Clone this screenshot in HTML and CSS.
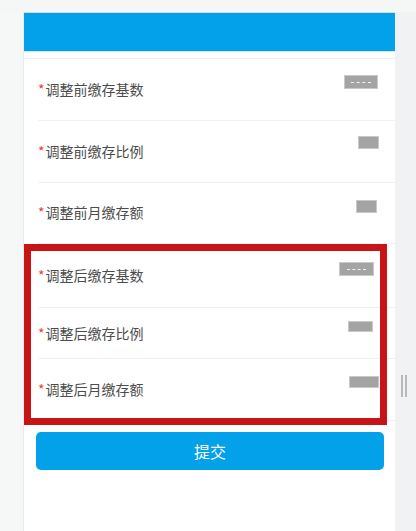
FILE: index.html
```html
<!DOCTYPE html>
<html lang="zh-CN">
<head>
<meta charset="utf-8">
<title>调整缴存</title>
<link rel="stylesheet" href="styles.css">
</head>
<body>
<div class="page">
  <div class="gutter-left"></div>
  <div class="card">
    <div class="header"></div>
    <div class="spacer"></div>
    <div class="form">
      <div class="row r1">
        <span class="label"><span class="req">*</span>调整前缴存基数</span>
        <span class="val v1"><span class="dash"></span></span>
      </div>
      <div class="row r2">
        <span class="label"><span class="req">*</span>调整前缴存比例</span>
        <span class="val v2"></span>
      </div>
      <div class="row r3">
        <span class="label"><span class="req">*</span>调整前月缴存额</span>
        <span class="val v3"></span>
      </div>
      <div class="group">
        <div class="row r4">
          <span class="label"><span class="req">*</span>调整后缴存基数</span>
          <span class="val v4"><span class="dash"></span></span>
        </div>
        <div class="row r5">
          <span class="label"><span class="req">*</span>调整后缴存比例</span>
          <span class="val v5"></span>
        </div>
        <div class="row r6">
          <span class="label"><span class="req">*</span>调整后月缴存额</span>
          <span class="val v6"></span>
        </div>
        <div class="highlight"></div>
      </div>
    </div>
    <div class="actions">
      <button class="submit">提交</button>
    </div>
  </div>
  <div class="gutter-right">
    <div class="grip"></div>
  </div>
</div>
</body>
</html>
```

FILE: styles.css
```css
* { box-sizing: border-box; }
html, body {
  margin: 0;
  padding: 0;
  height: 100%;
  background: #f5f6f6;
  font-family: "Noto Sans CJK SC", "Noto Sans", sans-serif;
}
.page {
  display: flex;
  height: 531px;
  padding-top: 12px;
  overflow: hidden;
}
.gutter-left {
  width: 24px;
  flex: none;
  background: #f6f7f7;
}
.card {
  width: 371px;
  flex: none;
  background: #fff;
  display: flex;
  flex-direction: column;
  box-shadow: -1px 0 0 #e9eaea;
}
.header {
  height: 40px;
  background: #02a1e9;
  border-top: 1px solid #d9dcdc;
  border-bottom: 1px solid #cbe9f7;
}
.spacer {
  height: 7px;
  border-bottom: 1px solid #f1f1f1;
}
.form {
  display: flex;
  flex-direction: column;
}
.row {
  display: flex;
  justify-content: space-between;
  align-items: center;
  margin-left: 14px;
  border-bottom: 1px solid #f1f1f1;
}
.label {
  font-size: 14px;
  line-height: 20px;
  color: #4c4c4c;
  margin-bottom: 2px;
}
.req {
  color: #f23a3a;
  margin-right: 1px;
}
.val {
  align-self: flex-start;
  background: #a4a4a4;
  border: 1px solid #c9c9c9;
  display: flex;
  align-items: center;
  justify-content: center;
}
.dash {
  display: block;
  width: 60%;
  border-top: 1px dashed #f4f4f4;
}
.r1 { height: 62px; }
.r2 { height: 62px; }
.r3 { height: 61px; }
.r4 { height: 64px; padding-top: 1px; }
.r5 { height: 51px; padding-top: 1px; }
.r6 { height: 62px; padding-top: 1px; }
.v1 { width: 34px; height: 14px; margin-top: 16px; margin-right: 17px; }
.v2 { width: 21px; height: 13px; margin-top: 15px; margin-right: 16px; }
.v3 { width: 21px; height: 13px; margin-top: 17px; margin-right: 18px; }
.v4 { width: 35px; height: 14px; margin-top: 17px; margin-right: 21px; }
.v5 { width: 25px; height: 11px; margin-top: 12px; margin-right: 22px; }
.v6 { width: 30px; height: 12px; margin-top: 16px; margin-right: 16px; }
.group {
  position: relative;
  display: flex;
  flex-direction: column;
}
.highlight {
  position: absolute;
  left: 0;
  top: 0;
  width: 363px;
  height: 181px;
  border: 7px solid #c81416;
  pointer-events: none;
}
.actions {
  padding: 11px 11px 0 12px;
}
.submit {
  display: block;
  width: 100%;
  height: 38px;
  border: none;
  border-radius: 5px;
  background: #02a1e9;
  color: #fff;
  font-family: "Noto Sans CJK SC", "Noto Sans", sans-serif;
  font-size: 16px;
  line-height: 38px;
  padding: 0;
}
.gutter-right {
  flex: 1;
  background: #f1f2f4;
  position: relative;
}
.grip {
  position: absolute;
  left: 6px;
  top: 363px;
  width: 6px;
  height: 22px;
  border-left: 2px solid #b9b9b9;
  border-right: 2px solid #b9b9b9;
}
```
